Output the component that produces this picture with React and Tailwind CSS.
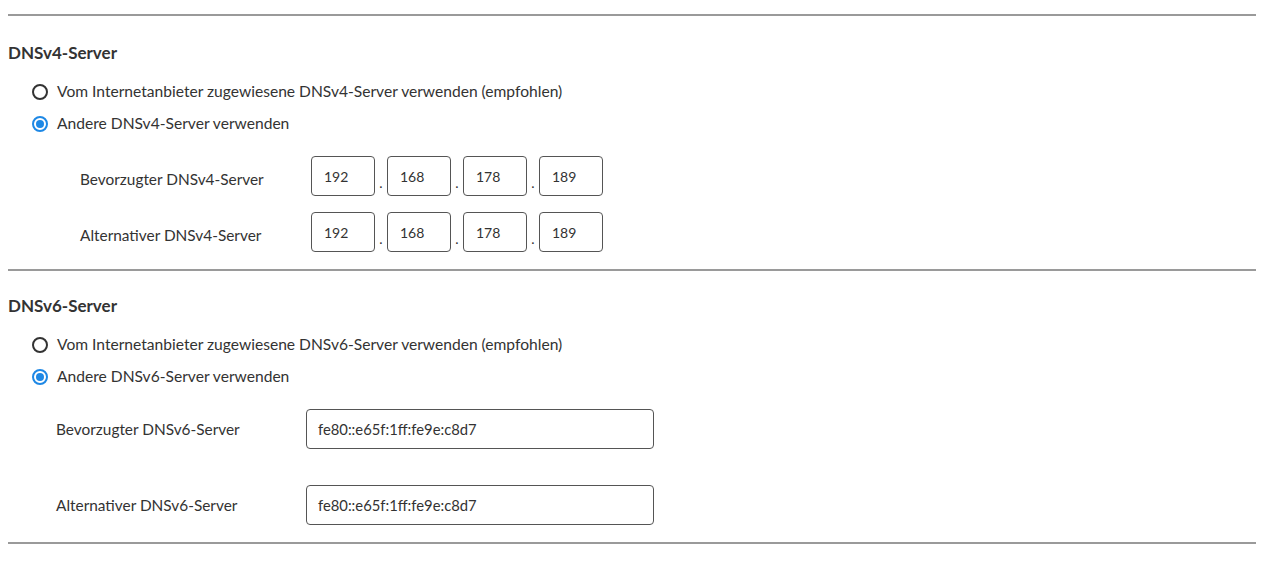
import React from 'react'

const font = { fontFamily: 'Lato, "Noto Sans", sans-serif' }

function Radio({ checked, label }) {
  return (
    <label className="flex h-8 items-center gap-[9px] pl-6">
      <span
        className={
          'flex h-4 w-4 items-center justify-center rounded-full border-2 ' +
          (checked ? 'border-[#1e88e5]' : 'border-[#333333]')
        }
      >
        {checked && <span className="h-2 w-2 rounded-full bg-[#1e88e5]" />}
      </span>
      <span className="text-[15.6px] text-[#333333]">{label}</span>
    </label>
  )
}

function Octets({ values }) {
  return (
    <div className="flex items-end">
      {values.map((v, i) => (
        <React.Fragment key={i}>
          {i > 0 && <span className="w-3 pb-[6px] text-center text-[14px] leading-none text-[#333333]">.</span>}
          <div className="flex h-10 w-16 items-center rounded border border-[#555555] px-3 text-[14px] text-[#333333]">
            {v}
          </div>
        </React.Fragment>
      ))}
    </div>
  )
}

function V4Row({ label }) {
  return (
    <div className="flex h-14 items-center pl-[72px]">
      <span className="w-[231px] pt-2 text-[15.4px] text-[#333333]">{label}</span>
      <Octets values={['192', '168', '178', '189']} />
    </div>
  )
}

function V6Row({ label }) {
  return (
    <div className="flex h-10 items-center pl-12">
      <span className="w-[250px] pt-[2px] text-[15.4px] text-[#333333]">{label}</span>
      <div className="flex h-10 w-[348px] items-center rounded border border-[#555555] px-[11px] text-[14.8px] text-[#333333]">
        fe80::e65f:1ff:fe9e:c8d7
      </div>
    </div>
  )
}

export default function App() {
  return (
    <div className="min-h-[565px] bg-white pl-2 pr-4 pt-[14px]" style={font}>
      <hr className="border-t-2 border-[#9a9a9a]" />

      <h3 className="mt-[27px] text-[17px] font-bold leading-5 text-[#333333]">DNSv4-Server</h3>
      <div className="mt-[13px]">
        <Radio label="Vom Internetanbieter zugewiesene DNSv4-Server verwenden (empfohlen)" />
        <Radio checked label="Andere DNSv4-Server verwenden" />
      </div>
      <div className="mt-2">
        <V4Row label="Bevorzugter DNSv4-Server" />
        <V4Row label="Alternativer DNSv4-Server" />
      </div>

      <hr className="mt-[9px] border-t-2 border-[#9a9a9a]" />

      <h3 className="mt-[25px] text-[17px] font-bold leading-5 text-[#333333]">DNSv6-Server</h3>
      <div className="mt-[13px]">
        <Radio label="Vom Internetanbieter zugewiesene DNSv6-Server verwenden (empfohlen)" />
        <Radio checked label="Andere DNSv6-Server verwenden" />
      </div>
      <div className="mt-[16px] flex flex-col gap-[36px]">
        <V6Row label="Bevorzugter DNSv6-Server" />
        <V6Row label="Alternativer DNSv6-Server" />
      </div>

      <hr className="mt-[17px] border-t-2 border-[#9a9a9a]" />
    </div>
  )
}
